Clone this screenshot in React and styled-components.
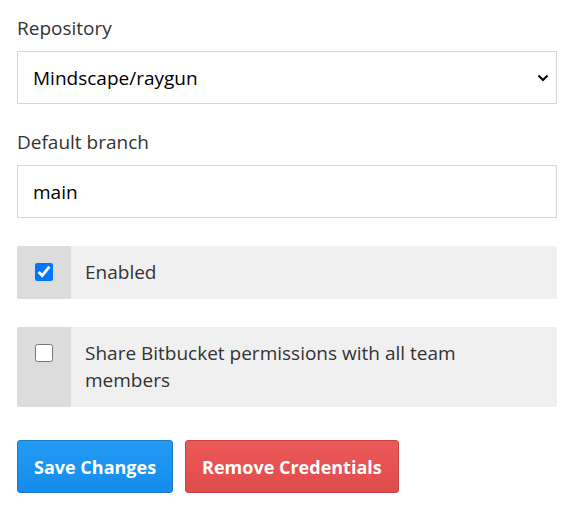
import React, { useState } from "react";
import styled, { createGlobalStyle } from "styled-components";

const GlobalStyle = createGlobalStyle`
  body {
    margin: 0;
    background: #fff;
    font-family: "Open Sans", "Noto Sans", sans-serif;
    color: #333;
  }
`;

const Form = styled.form`
  display: flex;
  flex-direction: column;
  padding: 15px 17px;
  width: 540px;
`;

const Field = styled.div`
  display: flex;
  flex-direction: column;
  margin-bottom: 25px;
`;

const Label = styled.label`
  font-size: 19px;
  line-height: 26px;
  color: #333;
  margin-bottom: 10px;
`;

const SelectWrap = styled.div`
  position: relative;
  display: flex;
`;

const Select = styled.select`
  flex: 1;
  height: 53px;
  appearance: none;
  border: 1px solid #d6d6d6;
  border-radius: 0;
  background: #fff;
  font-family: inherit;
  font-size: 19px;
  color: #000;
  padding: 0 40px 0 15px;
  outline: none;
`;

const Chevron = styled.svg`
  position: absolute;
  right: 8px;
  top: 50%;
  margin-top: -4px;
  pointer-events: none;
`;

const TextInput = styled.input`
  height: 53px;
  box-sizing: border-box;
  border: 1px solid #d6d6d6;
  font-family: inherit;
  font-size: 19px;
  color: #000;
  padding: 0 15px;
  outline: none;
`;

const CheckRow = styled.label`
  display: flex;
  min-height: 53px;
  background: #f0f0f0;
  border-radius: 2px;
  overflow: hidden;
  margin: 3px 0 25px;
  cursor: pointer;
`;

const CheckCell = styled.div`
  flex: 0 0 54px;
  background: #dcdcdc;
  display: flex;
  justify-content: center;
  align-items: flex-start;
  padding-top: 17px;
`;

const Box = styled.input`
  width: 18px;
  height: 18px;
  margin: 0;
  accent-color: #0075ff;
`;

const CheckText = styled.span`
  flex: 1;
  font-size: 19px;
  line-height: 27px;
  color: #333;
  padding: 13px 80px 13px 14px;
`;

const Actions = styled.div`
  display: flex;
  gap: 12px;
  margin-top: 8px;
`;

const Button = styled.button`
  height: 53px;
  padding: 0 16px;
  font-family: inherit;
  font-size: 18px;
  font-weight: 700;
  color: #fff;
  border-radius: 3px;
  cursor: pointer;
  border: 1px solid ${(p) => (p.$danger ? "#c84444" : "#1a7acc")};
  background: ${(p) =>
    p.$danger
      ? "linear-gradient(#ec5959, #e04b4b)"
      : "linear-gradient(#239bf4, #158ceb)"};
`;

export default function App() {
  const [enabled, setEnabled] = useState(true);
  const [share, setShare] = useState(false);

  return (
    <>
      <GlobalStyle />
      <Form onSubmit={(e) => e.preventDefault()}>
        <Field>
          <Label htmlFor="repo">Repository</Label>
          <SelectWrap>
            <Select id="repo" defaultValue="Mindscape/raygun">
              <option>Mindscape/raygun</option>
            </Select>
            <Chevron width="12" height="8" viewBox="0 0 12 8">
              <path d="M1.5 1.5 L6 6 L10.5 1.5" fill="none" stroke="#000" strokeWidth="2" />
            </Chevron>
          </SelectWrap>
        </Field>
        <Field>
          <Label htmlFor="branch">Default branch</Label>
          <TextInput id="branch" defaultValue="main" />
        </Field>
        <CheckRow>
          <CheckCell>
            <Box
              type="checkbox"
              checked={enabled}
              onChange={(e) => setEnabled(e.target.checked)}
            />
          </CheckCell>
          <CheckText>Enabled</CheckText>
        </CheckRow>
        <CheckRow>
          <CheckCell>
            <Box
              type="checkbox"
              checked={share}
              onChange={(e) => setShare(e.target.checked)}
            />
          </CheckCell>
          <CheckText>Share Bitbucket permissions with all team members</CheckText>
        </CheckRow>
        <Actions>
          <Button type="submit">Save Changes</Button>
          <Button type="button" $danger>
            Remove Credentials
          </Button>
        </Actions>
      </Form>
    </>
  );
}
